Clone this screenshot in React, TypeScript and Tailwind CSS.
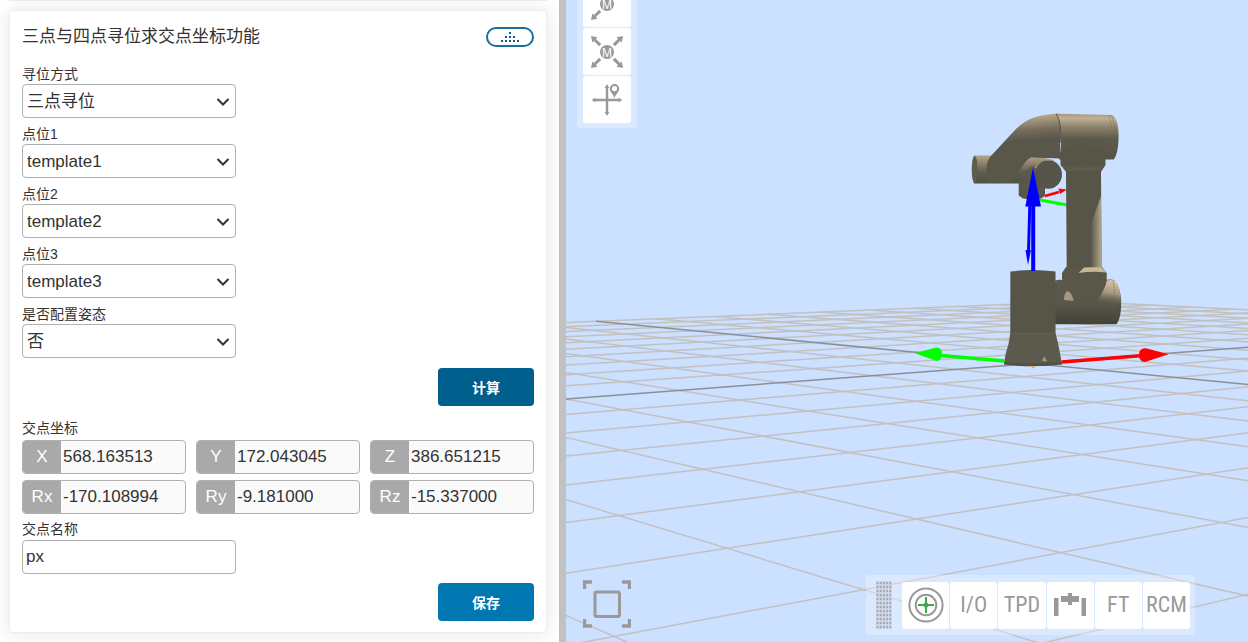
import { useState } from "react";
import type { ReactNode } from "react";

const HORIZON = { x0: 1033, y0: 363.6 };

/** Projects a floor coordinate (u, v) onto the view. */
function project(u: number, v: number): string {
  const w = 1 - 0.0424 * u + 0.0481 * v;
  const x = (HORIZON.x0 - 117.4 * u - 15.03 * v) / w;
  const y = (HORIZON.y0 - 9.85 * u + 11.22 * v) / w;
  return `${x.toFixed(1)},${y.toFixed(1)}`;
}

const steps = Array.from({ length: 21 }, (_, i) => i - 10);

function FloorGrid() {
  return (
    <g fill="none" strokeWidth="1.5">
      {[...steps.filter((s) => s !== 0), 0].map((s) => (
        <g key={s} stroke={s === 0 ? "#8b9096" : "#c3c1bf"}>
          <path d={`M${project(s, -10)}L${project(s, 10)}`} />
          <path d={`M${project(-10, s)}L${project(10, s)}`} />
        </g>
      ))}
    </g>
  );
}

function Robot() {
  return (
    <g>
      <defs>
        <linearGradient id="flange" gradientUnits="userSpaceOnUse" x1="0" y1="155.500" x2="0" y2="183.500">
          <stop offset="0" stopColor="#b5a58a" />
          <stop offset=".3" stopColor="#8b806a" />
          <stop offset=".6" stopColor="#5e5c4d" />
          <stop offset="1" stopColor="#504f42" />
        </linearGradient>
        <linearGradient id="arm" gradientUnits="userSpaceOnUse" x1="1046" y1="113" x2="1048" y2="139">
          <stop offset="0" stopColor="#bbab8f" />
          <stop offset=".25" stopColor="#a0947c" />
          <stop offset=".6" stopColor="#756d5b" />
          <stop offset="1" stopColor="#58574a" />
        </linearGradient>
        <linearGradient id="shoulder" x1="0" y1="0" x2="0" y2="1">
          <stop offset="0" stopColor="#a4957a" />
          <stop offset=".1" stopColor="#c0b095" />
          <stop offset=".3" stopColor="#8b806b" />
          <stop offset=".55" stopColor="#5c594b" />
          <stop offset="1" stopColor="#545446" />
        </linearGradient>
        <linearGradient id="elbow" x1="0" y1="0" x2="0" y2="1">
          <stop offset="0" stopColor="#5c5a4c" />
          <stop offset=".5" stopColor="#58574a" />
          <stop offset="1" stopColor="#434236" />
        </linearGradient>
        <linearGradient id="cap" gradientUnits="userSpaceOnUse" x1="1112" y1="280" x2="1108" y2="306">
          <stop offset="0" stopColor="#dbc6a6" />
          <stop offset=".5" stopColor="#a4977f" />
          <stop offset="1" stopColor="#53524600" />
        </linearGradient>
        <linearGradient id="edge" x1="0" y1="0" x2="1" y2="0">
          <stop offset="0" stopColor="#5b594a" />
          <stop offset="1" stopColor="#b5a78d" />
        </linearGradient>
      </defs>

      <path d="M1045 196L1059 192" stroke="#f00" strokeWidth="2.800" />
      <path d="M1058.500 188.500L1067 189.500L1060 194Z" fill="#f00" />
      <path d="M1040 200L1067 205" stroke="#0f0" strokeWidth="3" />

      <path d="M1018.700 180H1045V196L1040 199L1033 200L1023 198.500L1018.700 195.500Z" fill="#58574a" />
      <path d="M974 155.500H1003L1030 157.500Q1040 156 1050 159.500L1044 184L1019 183.500H974C971 176 971 162 974 155.500Z" fill="url(#flange)" />
      <ellipse cx="974.700" cy="169.500" rx="2.800" ry="13.600" fill="#5e5c4d" />
      <path
        d="M1060 113.700C1040 114 1026 118 1015 130L990 157C985 165 985 176 990 181C1000 183 1006 183 1010 181C1018 176 1024 160 1031 157.500L1060 158.500Z"
        fill="url(#arm)"
      />
      <path d="M1019 183.800C1022 172 1026 168 1036 165L1044 184V190H1019Z" fill="#5a584a" fillOpacity=".7" />
      <ellipse cx="1048.500" cy="174.500" rx="13.500" ry="14.300" fill="#55544a" />
      <path d="M1035.500 168C1037 161.500 1045 158.500 1054 160.500" fill="none" stroke="#b8a98d" strokeWidth="1.200" />
      <path d="M1036 166C1039 161 1046 159.500 1052 160.500" fill="none" stroke="#7a715d" strokeWidth=".7" />

      <path
        d="M1056 113.700L1112 115C1116.500 117 1118.600 125 1118.600 135C1118.600 148 1116.500 157 1113.500 159.500H1059C1062 146 1062 127 1056 113.700Z"
        fill="url(#shoulder)"
      />
      <path d="M1056 113.700C1060.500 121 1061.500 131 1060 143" fill="none" stroke="#46453a" strokeWidth=".9" />
      <path
        d="M1108 115C1112 122 1113 135 1112 148M1111 115C1115 122 1116 135 1115 150"
        fill="none"
        stroke="#6b6553"
        strokeWidth=".5"
        strokeDasharray="2 1"
      />
      <path d="M1084 143C1092 146 1101 150 1105.500 159.500V165L1101 171.500H1066L1060.500 165V159.500C1066 150 1076 146 1084 143Z" fill="#565548" />
      <path d="M1061 165L1066 171.500H1101L1105 165Q1083 169 1061 165Z" fill="#5d5a4b" />
      <path d="M1066 171H1101L1101.600 268H1066.700Z" fill="#565548" />
      <path d="M1101 196L1091 224V268H1101.600Z" fill="url(#edge)" />

      <path d="M1054 281C1060 278.500 1064 280 1066 281L1112 279.500C1124 285 1123 317 1116.500 324.200H1054Z" fill="url(#elbow)" />
      <path d="M1106.500 280.500L1113.500 279.500C1119 283 1121 292 1121 306L1094 306C1100 296 1105 290 1106.500 280.500Z" fill="url(#cap)" />
      <path d="M1113 280C1115 290 1115 300 1113 311" fill="none" stroke="#6b6553" strokeWidth=".6" strokeDasharray="2 1" />
      <path d="M1066 267H1102L1106.700 273V279C1106 290 1096 299 1087 300C1074 297 1064 288 1062 279V273Z" fill="#58574a" />
      <path d="M1084 267.500L1101 267L1106.500 272.500Q1092 271 1078.500 273Z" fill="#c9b699" />
      <path d="M1066.500 291.500C1070 290 1073 296 1073.500 301L1064 300C1064 296 1065 293 1066.500 291.500Z" fill="#a4977f" />

      <path d="M1010.300 271.500Q1033 268.500 1055.500 271.500V334H1010.300Z" fill="#565548" />
      <path d="M1010.300 333H1055.500L1058 343L1062 364Q1033 368 1004 364Q1005 354 1008.500 344Z" fill="#5c5a4c" />
      <path d="M1010.300 333.300H1055.500" stroke="#656253" strokeWidth=".8" />
      <path d="M1004 362Q1033 364.500 1062 362V364.500Q1033 368 1004 364.500Z" fill="#535145" />
      <path d="M1042 361L1044 356L1047 361.500Z" fill="#a4977f" />
      <path d="M1030.500 366.200H1035.500L1033 368.500Z" fill="#f5a51c" />

      <path d="M1004.500 361L941 355.500" stroke="#0f0" strokeWidth="3.600" />
      <path d="M915 353.300L936 347.600Q942 347.500 942 354Q942 360 936.500 361Z" fill="#0f0" />
      <path d="M1062 362L1140 355.800" stroke="#f00" strokeWidth="3.600" />
      <path d="M1168.500 354.300L1146 348.200Q1139 347.500 1139 355Q1139 361.500 1145 362Z" fill="#f00" />
      <path d="M1033.200 205V271" stroke="#00f" strokeWidth="4" />
      <path d="M1029.800 205L1028.500 252" stroke="#00f" strokeWidth="3" />
      <path d="M1025.500 250L1031 250L1028 265Z" fill="#00f" />
      <path d="M1033 167.500L1041 206.500H1025.300Z" fill="#00f" />
    </g>
  );
}

const selectFields = [
  { id: "mode", label: "寻位方式", options: ["三点寻位", "四点寻位"] },
  { id: "p1", label: "点位1", options: ["template1", "template2", "template3"] },
  { id: "p2", label: "点位2", options: ["template2", "template1", "template3"] },
  { id: "p3", label: "点位3", options: ["template3", "template1", "template2"] },
  { id: "pose", label: "是否配置姿态", options: ["否", "是"] },
];

const coordinates = [
  ["X", "568.163513"],
  ["Y", "172.043045"],
  ["Z", "386.651215"],
  ["Rx", "-170.108994"],
  ["Ry", "-9.181000"],
  ["Rz", "-15.337000"],
];

function SelectField({ id, label, options }: { id: string; label: string; options: string[] }) {
  return (
    <div className="w-[214px]">
      <label htmlFor={id} className="block text-sm leading-5">
        {label}
      </label>
      <div className="relative">
        <select
          id={id}
          className="block h-[34px] w-full appearance-none rounded border border-[#b0b0b0] bg-white pt-0.5 pr-8 pl-1 text-[17px] leading-6"
        >
          {options.map((o) => (
            <option key={o}>{o}</option>
          ))}
        </select>
        <svg
          className="pointer-events-none absolute top-3.5 right-1.5 h-2 w-3.5"
          viewBox="0 0 14 8"
          fill="none"
          stroke="#333"
          strokeWidth="2"
          aria-hidden="true"
        >
          <path d="M1.500 1L7 6.500L12.500 1" />
        </svg>
      </div>
    </div>
  );
}

function ToolButton({ label, children }: { label: string; children: ReactNode }) {
  return (
    <button
      type="button"
      aria-label={label}
      className="flex h-[47px] w-full items-center justify-center rounded-[3px] bg-white font-['Liberation_Sans_Narrow','Roboto_Condensed','Liberation_Sans',sans-serif] text-[22px] leading-6 text-[#999]"
    >
      {children}
    </button>
  );
}

function MoveIcon({ arms }: { arms: string[] }) {
  return (
    <svg width="34" height="34" viewBox="0 0 34 34" aria-hidden="true">
      {arms.map((r) => (
        <path
          key={r}
          transform={r}
          fill="#999"
          d="M1 1L7.500 2.300L6 4L11.300 9L9 11.300L4 6L2.300 7.500Z"
        />
      ))}
      <circle cx="17" cy="17" r="7" fill="#999" />
      <text x="17" y="21.500" textAnchor="middle" fontSize="12" fill="#fff" fontFamily="Liberation Sans, sans-serif">
        M
      </text>
    </svg>
  );
}

const allArms = ["rotate(0)", "rotate(90 17 17)", "rotate(180 17 17)", "rotate(270 17 17)"];

function SceneView() {
  return (
    <section className="relative overflow-hidden bg-[#cce0ff]">
      <svg
        className="absolute inset-0 h-full w-full"
        viewBox="566 0 682 642"
        preserveAspectRatio="xMidYMid slice"
        role="img"
        aria-label="机器人三维视图"
      >
        <FloorGrid />
        <Robot />
      </svg>

      <div className="absolute -top-[26px] left-[11px] flex w-[60px] flex-col gap-px rounded-[3px] bg-white/30 px-1.5 pt-1.5 pb-[5px]">
        <ToolButton label="单向移动">
          <MoveIcon arms={["rotate(270 17 17)", "rotate(90 17 17)"]} />
        </ToolButton>
        <ToolButton label="多向移动">
          <MoveIcon arms={allArms} />
        </ToolButton>
        <ToolButton label="定位">
          <svg width="34" height="34" viewBox="0 0 34 34" fill="#999" aria-hidden="true">
            <path d="M15.800 4H18.200V30H15.800ZM4 15.800H30V18.200H4Z" />
            <path d="M17 1L19.300 5H14.700ZM17 33L19.300 29H14.700ZM1.500 17L5.500 14.700V19.300ZM32.500 17L28.500 14.700V19.300Z" />
            <path
              fillRule="evenodd"
              d="M24.500 1A4.700 4.700 0 0 1 29.200 5.700C29.200 9 26 10.500 24.500 15C23 10.500 19.800 9 19.800 5.700A4.700 4.700 0 0 1 24.500 1ZM24.500 3A2.600 2.600 0 1 0 24.500 8.200A2.600 2.600 0 1 0 24.500 3Z"
            />
          </svg>
        </ToolButton>
      </div>

      <button type="button" aria-label="全屏" className="absolute bottom-3.5 left-[17px]">
        <svg className="block h-12 w-12" viewBox="0 0 48 48" fill="none" stroke="#999" aria-hidden="true">
          <path d="M1.500 9V2H9M39 2H46.500V9M46.500 39V46H39M9 46H1.500V39" strokeWidth="3.400" />
          <rect x="12" y="12" width="24.500" height="24.500" rx="1.500" strokeWidth="3" />
        </svg>
      </button>

      <div className="absolute right-[53px] bottom-[7px] flex items-center rounded-[3px] bg-white/30 py-1.5 pr-[5px] pl-2.5">
        <svg className="mr-2.5 block h-12 w-4" viewBox="0 0 16 48" fill="#999" aria-hidden="true">
          {Array.from({ length: 12 }, (_, r) =>
            Array.from({ length: 5 }, (_, c) => (
              <path
                key={`${r}-${c}`}
                d={`M${c * 3.2 + 0.2} ${r * 4 + 0.5}h2.500v3h-2.500zm0 1.400h2.500`}
                stroke="#dce9ff"
                strokeWidth=".4"
              />
            )),
          )}
        </svg>
        <div className="grid w-72 grid-cols-6 gap-px">
          <ToolButton label="坐标系">
            <svg width="36" height="36" viewBox="0 0 36 36" fill="none" aria-hidden="true">
              <circle cx="18" cy="18" r="16.600" stroke="#999" strokeWidth="2" />
              <circle cx="18" cy="18" r="10.300" stroke="#999" strokeWidth="2" />
              <path d="M18 10V26M10 18H26" stroke="#2fb344" strokeWidth="2" />
              <circle cx="18" cy="18" r="2.500" fill="#4f9d63" />
            </svg>
          </ToolButton>
          <ToolButton label="I/O">I/O</ToolButton>
          <ToolButton label="TPD">TPD</ToolButton>
          <ToolButton label="夹爪">
            <svg width="32" height="24" viewBox="0 0 32 24" fill="#999" aria-hidden="true">
              <path d="M0 5H4.500V23H0ZM27.500 5H32V23H27.500ZM7 3H14V0H18V3H25V9H18V12H14V9H7Z" />
            </svg>
          </ToolButton>
          <ToolButton label="FT">FT</ToolButton>
          <ToolButton label="RCM">RCM</ToolButton>
        </div>
      </div>
    </section>
  );
}

export default function App() {
  const [name, setName] = useState("px");
  return (
    <main className="grid min-h-screen grid-cols-[559fr_7px_682fr] bg-white font-['Liberation_Sans','Noto_Sans_CJK_SC',sans-serif] text-[#333]">
      <div className="overflow-hidden pr-3 pl-[9px]">
        <div className="mb-[9px] h-px bg-[#eeeef2] shadow-[0_0_20px_rgba(0,0,0,0.1)]" />
        <form
          className="rounded border border-[#ececf2] bg-white px-3 pt-4 pb-[11px] shadow-[0_0_20px_rgba(0,0,0,0.1)]"
          onSubmit={(e) => e.preventDefault()}
        >
          <div className="mb-[17px] flex h-5 items-center justify-between">
            <h2 className="text-[17px] leading-5">三点与四点寻位求交点坐标功能</h2>
            <button
              type="button"
              aria-label="收起"
              className="flex h-5 w-12 items-center justify-center rounded-full border-2 border-[#1a6f9a]"
            >
              <svg width="18" height="10" viewBox="0 0 18 10" fill="#005f8f" aria-hidden="true">
                <path d="M8 0h2v2h-2zM4 4h2v2h-2zM8 4h2v2h-2zM12 4h2v2h-2zM0 8h2v2h-2zM4 8h2v2h-2zM8 8h2v2h-2zM12 8h2v2h-2zM16 8h2v2h-2z" />
              </svg>
            </button>
          </div>

          <div className="flex flex-col gap-1.5">
            {selectFields.map((f) => (
              <SelectField key={f.id} {...f} />
            ))}
          </div>

          <div className="mt-2.5 flex justify-end">
            <button type="button" className="h-[38px] w-24 rounded bg-[#005f8d] pt-0.5 text-sm font-bold text-white">
              计算
            </button>
          </div>

          <fieldset className="mt-3">
            <legend className="mb-0.5 block text-sm leading-5">交点坐标</legend>
            <div className="grid grid-cols-3 gap-x-2.5 gap-y-1.5">
              {coordinates.map(([axis, value]) => (
                <label
                  key={axis}
                  className="flex h-[34px] overflow-hidden rounded border border-[#b0b0b0] bg-[#fafafa] text-[17px] leading-8"
                >
                  <span className="w-[38px] shrink-0 bg-[#a9a9a9] text-center text-white">{axis}</span>
                  <input readOnly value={value} className="w-full min-w-0 bg-transparent pl-0.5 outline-none" />
                </label>
              ))}
            </div>
          </fieldset>

          <label htmlFor="point-name" className="mt-[5px] block text-sm leading-5">
            交点名称
          </label>
          <input
            id="point-name"
            value={name}
            onChange={(e) => setName(e.target.value)}
            className="mt-px block h-[34px] w-[214px] rounded border border-[#b0b0b0] bg-white pl-[3px] text-[17px]"
          />

          <div className="mt-[9px] flex justify-end">
            <button type="submit" className="h-[38px] w-24 rounded bg-[#0077b0] pt-0.5 text-sm font-bold text-white">
              保存
            </button>
          </div>
        </form>
      </div>
      <div className="bg-[#c1c1c1]" />
      <SceneView />
    </main>
  );
}
